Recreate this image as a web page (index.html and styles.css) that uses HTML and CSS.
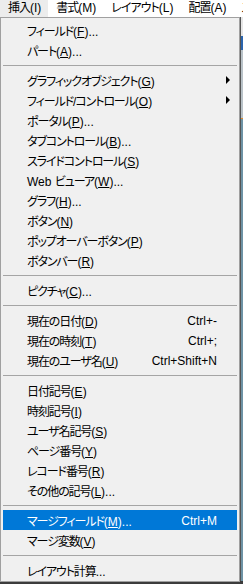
FILE: index.html
```html
<!DOCTYPE html>
<html lang="ja">
<head>
  <meta charset="UTF-8">
  <meta name="viewport" content="width=device-width, initial-scale=1.0">
  <title>挿入メニュー</title>
  <link rel="stylesheet" href="styles.css">
</head>
<body>
  <!-- menu bar -->
  <nav class="menubar">
    <span class="menubar-item open">挿入<span class="key">(I)</span></span>
    <span class="menubar-item">書式<span class="key">(M)</span></span>
    <span class="menubar-item">レイアウト<span class="key">(L)</span></span>
    <span class="menubar-item">配置<span class="key">(A)</span></span>
    <span class="menubar-item">ス</span>
  </nav>

  <div class="workspace">
    <!-- the open "挿入" menu -->
    <ul class="dropdown">
      <li class="item"><span class="label">フィールド<span class="key">(<u>F</u>)...</span></span></li>
      <li class="item"><span class="label">パート<span class="key">(<u>A</u>)...</span></span></li>
      <li class="sep"></li>
      <li class="item"><span class="label">グラフィックオブジェクト<span class="key">(<u>G</u>)</span></span><span class="arrow"></span></li>
      <li class="item"><span class="label">フィールド/コントロール<span class="key">(<u>O</u>)</span></span><span class="arrow"></span></li>
      <li class="item"><span class="label">ポータル<span class="key">(<u>P</u>)...</span></span></li>
      <li class="item"><span class="label">タブコントロール<span class="key">(<u>B</u>)...</span></span></li>
      <li class="item"><span class="label">スライドコントロール<span class="key">(<u>S</u>)</span></span></li>
      <li class="item"><span class="label"><span class="key">Web </span>ビューア<span class="key">(<u>W</u>)...</span></span></li>
      <li class="item"><span class="label">グラフ<span class="key">(<u>H</u>)...</span></span></li>
      <li class="item"><span class="label">ボタン<span class="key">(<u>N</u>)</span></span></li>
      <li class="item"><span class="label">ポップオーバーボタン<span class="key">(<u>P</u>)</span></span></li>
      <li class="item"><span class="label">ボタンバー<span class="key">(<u>R</u>)</span></span></li>
      <li class="sep"></li>
      <li class="item"><span class="label">ピクチャ<span class="key">(<u>C</u>)...</span></span></li>
      <li class="sep"></li>
      <li class="item"><span class="label">現在の日付<span class="key">(<u>D</u>)</span></span><span class="shortcut">Ctrl+-</span></li>
      <li class="item"><span class="label">現在の時刻<span class="key">(<u>T</u>)</span></span><span class="shortcut">Ctrl+;</span></li>
      <li class="item"><span class="label">現在のユーザ名<span class="key">(<u>U</u>)</span></span><span class="shortcut">Ctrl+Shift+N</span></li>
      <li class="sep"></li>
      <li class="item"><span class="label">日付記号<span class="key">(<u>E</u>)</span></span></li>
      <li class="item"><span class="label">時刻記号<span class="key">(<u>I</u>)</span></span></li>
      <li class="item"><span class="label">ユーザ名記号<span class="key">(<u>S</u>)</span></span></li>
      <li class="item"><span class="label">ページ番号<span class="key">(<u>Y</u>)</span></span></li>
      <li class="item"><span class="label">レコード番号<span class="key">(<u>R</u>)</span></span></li>
      <li class="item"><span class="label">その他の記号<span class="key">(<u>L</u>)...</span></span></li>
      <li class="sep"></li>
      <li class="item active"><span class="label">マージフィールド<span class="key">(<u>M</u>)...</span></span><span class="shortcut">Ctrl+M</span></li>
      <li class="item"><span class="label">マージ変数<span class="key">(<u>V</u>)</span></span></li>
      <li class="sep"></li>
      <li class="item"><span class="label">レイアウト計算<span class="key">...</span></span></li>
    </ul>

    <!-- bit of the window behind the menu -->
    <div class="backdrop">
      <div class="bd-panel"></div>
      <div class="bd-blue"></div>
      <div class="bd-grey"></div>
      <div class="bd-line"></div>
      <div class="bd-canvas"></div>
    </div>
  </div>
</body>
</html>
```

FILE: styles.css
```css
body {
  margin: 0;
  width: 243px;
  height: 584px;
  overflow: hidden;
  font-family: "Liberation Sans", "Noto Sans CJK JP", sans-serif;
  font-size: 12px;
  font-feature-settings: "palt";
  color: #000;
  background-color: #3c3c3c;
}

/* latin part of a caption keeps its normal spacing */
.key {
  letter-spacing: 0;
}

.menubar {
  display: flex;
  height: 17px;
  line-height: 17px;
  background-color: #fff;
  white-space: nowrap;
  overflow: hidden;
  letter-spacing: -1px;
}

.menubar-item {
  padding: 0 7px 0 8px;
}

.menubar-item .key {
  letter-spacing: 0;
}

.menubar-item.open {
  background-color: #ececec;
}

.workspace {
  display: flex;
  align-items: flex-start;
  height: 567px;
}

.dropdown {
  list-style: none;
  margin: 0;
  padding: 2px 0 1px 0;
  width: 240px;
  flex: none;
  box-sizing: border-box;
  background-color: #f0f0f0;
  border: 1px solid #a0a0a0;
}

.item {
  display: flex;
  align-items: center;
  height: 20px;
  margin: 0 2px;
  padding: 1px 6px 0 24px;
  box-sizing: border-box;
  white-space: nowrap;
}

.item .label {
  flex: 1;
  letter-spacing: -1.1px;
}

.item .label .key {
  letter-spacing: 0;
}

.item u {
  text-underline-offset: 1px;
}

.shortcut {
  margin-right: 14px;
}

.arrow {
  width: 0;
  height: 0;
  margin-right: 1px;
  margin-top: -1px;
  border-top: 4px solid transparent;
  border-bottom: 4px solid transparent;
  border-left: 4px solid #000;
}

.item.active {
  background-color: #0078d7;
  color: #fff;
}

.sep {
  height: 10px;
  margin: 0 2px;
  box-sizing: border-box;
  padding-top: 5px;
}

.sep::after {
  content: "";
  display: block;
  height: 1px;
  background-color: #a5a5a5;
}

.backdrop {
  flex: 1;
  display: flex;
  flex-direction: column;
  height: 564px;
  border-left: 1px solid #555;
}

.bd-panel {
  height: 19px;
  background-color: #e6e6e6;
}

.bd-blue {
  height: 14px;
  background-color: #2a64ad;
}

.bd-grey {
  height: 68px;
  background-color: #b9c2c8;
}

.bd-line {
  height: 1px;
  background-color: #e08a2a;
}

.bd-canvas {
  flex: 1;
  background-color: #6e93a5;
}
```
